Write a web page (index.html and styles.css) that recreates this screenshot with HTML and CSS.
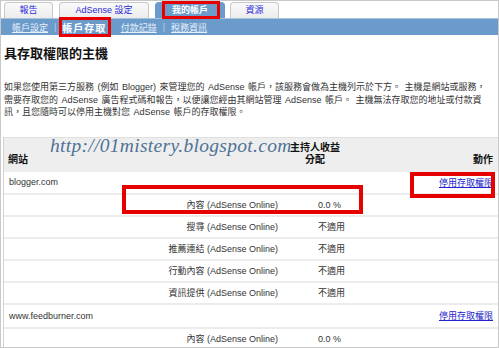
FILE: index.html
```html
<!DOCTYPE html>
<html lang="zh-Hant">
<head>
<meta charset="utf-8">
<link rel="stylesheet" href="styles.css">
</head>
<body>
<div class="frame">
  <div class="tabs">
    <a class="tab tab-w1">報告</a>
    <a class="tab tab-w2">AdSense 設定</a>
    <a class="tab tab-w3 tab-on">我的帳戶</a>
    <a class="tab tab-w1">資源</a>
  </div>
  <div class="subnav">
    <a class="sub">帳戶設定</a><span class="sep">|</span><span class="sub sub-on">帳戶存取</span><span class="sep sep-hidden">|</span><a class="sub">付款記錄</a><span class="sep">|</span><a class="sub">稅務資訊</a>
  </div>
  <h1 class="title">具存取權限的主機</h1>
  <p class="intro">如果您使用第三方服務 (例如 Blogger) 來管理您的 AdSense 帳戶，該服務會做為主機列示於下方。 主機是網站或服務，<br>需要存取您的 AdSense 廣告程式碼和報告，以便讓您經由其網站管理 AdSense 帳戶。 主機無法存取您的地址或付款資<br>訊，且您隨時可以停用主機對您 AdSense 帳戶的存取權限。</p>

  <div class="hosts">
    <div class="row head">
      <div class="c1">網站</div>
      <div class="c2">主持人收益<br>分配</div>
      <div class="c3">動作</div>
    </div>
    <div class="row site">
      <div class="c1">blogger.com</div>
      <div class="c2"></div>
      <div class="c3"><a class="link">停用存取權限</a></div>
    </div>
    <div class="row prod"><div class="c1">內容 (AdSense Online)</div><div class="c2">0.0 %</div><div class="c3"></div></div>
    <div class="row prod"><div class="c1">搜尋 (AdSense Online)</div><div class="c2">不適用</div><div class="c3"></div></div>
    <div class="row prod"><div class="c1">推薦連結 (AdSense Online)</div><div class="c2">不適用</div><div class="c3"></div></div>
    <div class="row prod"><div class="c1">行動內容 (AdSense Online)</div><div class="c2">不適用</div><div class="c3"></div></div>
    <div class="row prod"><div class="c1">資訊提供 (AdSense Online)</div><div class="c2">不適用</div><div class="c3"></div></div>
    <div class="row site site2">
      <div class="c1">www.feedburner.com</div>
      <div class="c2"></div>
      <div class="c3"><a class="link">停用存取權限</a></div>
    </div>
    <div class="row prod"><div class="c1">內容 (AdSense Online)</div><div class="c2">0.0 %</div><div class="c3"></div></div>
  </div>

  <div class="watermark">http://01mistery.blogspot.com</div>
  <div class="mark mark-tab"></div>
  <div class="mark mark-sub"></div>
  <div class="mark mark-row"></div>
  <div class="mark mark-link"></div>
</div>
</body>
</html>
```
FILE: styles.css
```css
html, body {
  margin: 0;
  padding: 0;
  background: #fff;
}
body {
  font-family: "Liberation Sans", "Noto Sans CJK TC", sans-serif;
  font-size: 9px;
  color: #222;
}
.frame {
  position: relative;
  width: 499px;
  height: 348px;
  box-sizing: border-box;
  border: 1px solid #c9c9c9;
  overflow: hidden;
}
.tabs {
  display: flex;
  align-items: flex-end;
  height: 17px;
  padding-left: 3px;
  box-sizing: border-box;
}
.tab {
  display: flex;
  align-items: center;
  justify-content: center;
  height: 16px;
  box-sizing: border-box;
  margin-right: 6px;
  border: 1px solid #c8c8c8;
  border-bottom: none;
  border-radius: 4px 4px 0 0;
  background: linear-gradient(#fafafa, #ececec);
  color: #2b2bd8;
  font-size: 9px;
  line-height: 1;
}
.tab-w1 { width: 49px; }
.tab-w2 { width: 90px; }
.tab-w3 { width: 70px; margin-right: 5px; }
.tab-on {
  background: #6b9bcb;
  border-color: #6b9bcb;
  color: #fff;
  font-weight: bold;
}
.subnav {
  display: flex;
  align-items: center;
  height: 17px;
  background: #6b9bcb;
  border-top: 1px solid #a9c3dd;
  box-sizing: border-box;
  padding-left: 11px;
  color: #eef3fa;
}
.sub {
  color: #e8eff8;
  text-decoration: underline;
  font-size: 9px;
}
.sub-on {
  color: #fff;
  text-decoration: none;
  font-weight: bold;
  font-size: 10px;
  letter-spacing: 1px;
}
.sep {
  color: #b8cfe6;
  margin: 0 6px;
}
.sep-hidden { visibility: hidden; }
.title {
  margin: 11px 0 0 3px;
  font-size: 13px;
  line-height: 16px;
  font-weight: bold;
  color: #111;
}
.intro {
  margin: 19px 0 0 3px;
  white-space: nowrap;
  font-size: 9px;
  line-height: 12.5px;
  word-spacing: 1px;
  color: #333;
}
.hosts {
  margin: 18px 0 0 2px;
  border-left: 1px solid #d0d0d0;
}
.row {
  display: grid;
  grid-template-columns: 278px 66px 1fr;
  height: 22px;
  box-sizing: border-box;
  border-bottom: 2px solid #ececec;
  align-items: center;
}
.head {
  height: 35px;
  background: #eeeeee;
  border-top: 1px solid #e0e0e0;
  border-bottom: none;
  align-items: end;
  font-weight: bold;
  font-size: 10px;
  color: #111;
}
.head .c1 { padding: 0 0 6px 4px; }
.head .c2 {
  align-self: start;
  padding-top: 4px;
  text-align: center;
  line-height: 12px;
}
.head .c3 { padding: 0 5px 6px 0; text-align: right; }
.site { height: 23px; }
.site2 { height: 24px; }
.site .c1 { padding-left: 5px; color: #333; }
.site .c3 { text-align: right; padding-right: 5px; }
.prod .c1 { text-align: right; padding-right: 4px; color: #333; }
.prod .c2 { padding-left: 36px; color: #333; white-space: nowrap; }
.link {
  color: #2222cc;
  text-decoration: underline;
}
.watermark {
  position: absolute;
  left: 49px;
  top: 134px;
  font-family: "Liberation Serif", serif;
  font-style: italic;
  font-size: 19.5px;
  color: #4f7397;
  letter-spacing: 0.3px;
}
.mark {
  position: absolute;
  border: 3px solid #e60000;
  box-sizing: border-box;
}
.mark-tab { left: 161px; top: 0; width: 58px; height: 18px; }
.mark-sub { left: 58px; top: 16px; width: 52px; height: 20px; }
.mark-row { left: 121px; top: 184px; width: 241px; height: 29px; border-width: 4px; }
.mark-link { left: 409px; top: 171px; width: 85px; height: 26px; border-width: 4px; }
```
